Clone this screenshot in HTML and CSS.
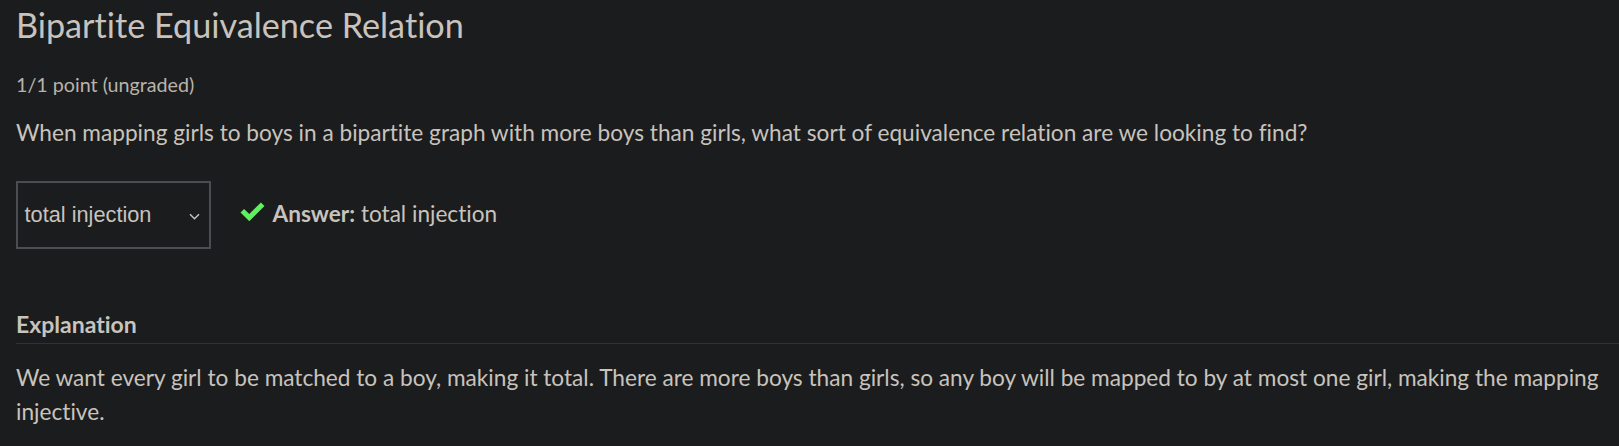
FILE: index.html
```html
<!DOCTYPE html>
<html lang="en">
<head>
<meta charset="utf-8">
<title>Bipartite Equivalence Relation</title>
<link rel="stylesheet" href="styles.css">
</head>
<body>
<div class="problem">
  <h2 class="title">Bipartite Equivalence Relation</h2>
  <div class="points">1/1 point (ungraded)</div>
  <p class="question">When mapping girls to boys in a bipartite graph with more boys than girls, what sort of equivalence relation are we looking to find?</p>
  <div class="answer-row">
    <div class="select">
      <span class="select-text">total injection</span>
      <svg class="chevron" width="11" height="7" viewBox="0 0 11 7"><path d="M1 1.2l4.5 4.5 4.5-4.5" fill="none" stroke="#c8c3bc" stroke-width="1.5"/></svg>
    </div>
    <svg class="check" width="25" height="19" viewBox="0 0 25 19"><path d="M0.5 10.5l3.6-3.6 5.2 5.1L20.9 0.4l3.6 3.6L9.3 19.2z" fill="#5cf25c"/></svg>
    <span class="answer"><b>Answer:</b> total injection</span>
  </div>
  <h3 class="expl-head">Explanation</h3>
  <p class="expl">We want every girl to be matched to a boy, making it total. There are more boys than girls, so any boy will be mapped to by at most one girl, making the mapping injective.</p>
</div>
</body>
</html>
```
FILE: styles.css
```css
html, body {
  margin: 0;
  background: #1b1c1e;
}
body {
  color: #c8c3bc;
  font-family: "Lato", "Liberation Sans", sans-serif;
  font-variant-ligatures: none;
}
.problem {
  padding: 4px 0 0 16px;
}
.title {
  margin: 0;
  font-size: 34.2px;
  font-weight: 400;
  line-height: 41px;
  color: #c8c3bc;
}
.points {
  margin-top: 24.6px;
  font-size: 19.7px;
  line-height: 29.5px;
  color: #b9b3aa;
}
.question {
  margin: 17px 0 0;
  font-size: 22.65px;
  line-height: 34px;
}
.answer-row {
  margin-top: 30.5px;
  display: flex;
  align-items: center;
}
.select {
  box-sizing: border-box;
  width: 195px;
  height: 68px;
  border: 2px solid #4a4e52;
  display: flex;
  align-items: center;
  padding: 0 9px 0 7px;
  margin-left: -0.5px;
  font-family: "Liberation Sans", Arial, sans-serif;
  font-size: 21.76px;
}
.select-text {
  flex: 1;
  padding-top: 1px;
}
.chevron {
  display: block;
  margin-top: 3px;
}
.check {
  display: block;
  margin-left: 29px;
  margin-top: -7px;
}
.answer {
  margin-left: 8px;
  font-size: 22.6px;
  line-height: 27px;
  margin-top: -3px;
}
.answer b {
  font-weight: 700;
}
.expl-head {
  margin: 62.8px 0 0;
  padding-bottom: 4px;
  border-bottom: 1px solid #303336;
  font-size: 23px;
  font-weight: 700;
  line-height: 27.6px;
}
.expl {
  margin: 17.25px 0 0;
  font-size: 22.65px;
  line-height: 34px;
}
```
